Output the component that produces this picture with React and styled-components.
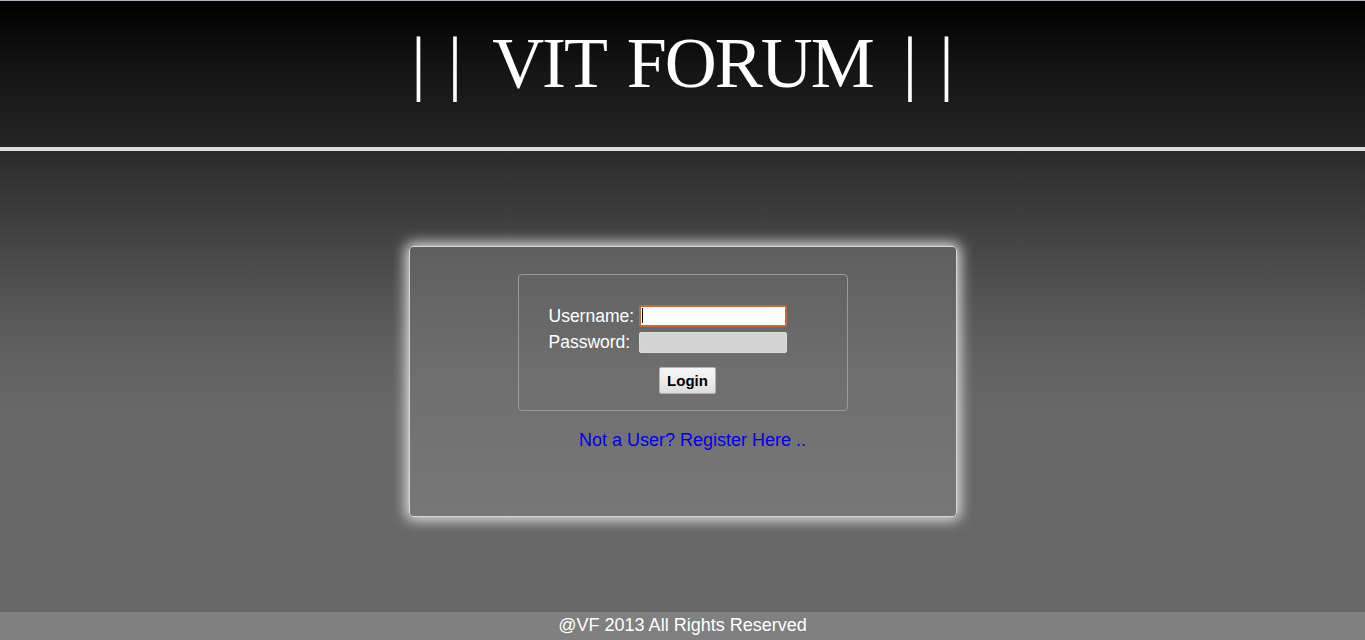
import React from "react";
import styled, { createGlobalStyle } from "styled-components";

const Global = createGlobalStyle`
  html, body { margin: 0; padding: 0; }
  body {
    font-family: "Liberation Sans", Arial, sans-serif;
    background: #676767;
    min-height: 640px;
  }
`;

const Page = styled.div`
  display: flex;
  flex-direction: column;
  height: 640px;
  overflow: hidden;
`;

const Header = styled.header`
  height: 147px;
  box-sizing: border-box;
  border-top: 1px solid #a7b0b9;
  padding-top: 26px;
  background: linear-gradient(to bottom, #000000 0%, #141414 45%, #252525 100%);
  display: flex;
  justify-content: center;
`;

const Title = styled.h1`
  margin: 0;
  display: flex;
  gap: 30px;
  font-family: "Liberation Serif", "Times New Roman", serif;
  font-weight: normal;
  font-size: 72px;
  line-height: 72px;
  color: #ffffff;
  white-space: pre;
`;

const Bars = styled.span`
  word-spacing: 4px;
`;

const Name = styled.span`
  letter-spacing: -2px;
  word-spacing: 6px;
`;

const Divider = styled.div`
  height: 4px;
  background: #dcdcdc;
`;

const Main = styled.main`
  flex: 1;
  background: linear-gradient(to bottom, #2b2b2b 0px, #4a4a4a 110px, #606060 200px, #676767 260px, #676767 100%);
  display: flex;
  flex-direction: column;
  align-items: center;
  padding-top: 95px;
`;

const Card = styled.section`
  width: 548px;
  height: 271px;
  box-sizing: border-box;
  border: 1px solid #d8d8d8;
  border-radius: 4px;
  background: linear-gradient(to bottom, #5f5f5f 0%, #6f6f6f 50%, #777777 100%);
  box-shadow: 0 0 14px 3px rgba(255, 255, 255, 0.85);
  display: flex;
  flex-direction: column;
  align-items: center;
  padding-top: 27px;
`;

const FormBox = styled.form`
  width: 330px;
  height: 137px;
  box-sizing: border-box;
  border: 1px solid #9a9a9a;
  border-radius: 4px;
  display: flex;
  flex-direction: column;
  align-items: center;
  padding-top: 30px;
`;

const Fields = styled.div`
  align-self: flex-start;
  margin-left: 30px;
  display: grid;
  grid-template-columns: 86px 148px;
  column-gap: 4px;
  row-gap: 5px;
  align-items: center;
`;

const Label = styled.label`
  color: #ffffff;
  font-size: 17.5px;
  line-height: 21px;
  white-space: nowrap;
`;

const Input = styled.input`
  box-sizing: border-box;
  width: 148px;
  height: ${(p) => (p.$focused ? "22px" : "21px")};
  margin: 0;
  padding: 0 2px;
  font-family: "Liberation Sans", Arial, sans-serif;
  font-size: 15px;
  outline: none;
  border-radius: 2px;
  border: ${(p) => (p.$focused ? "2px solid #c46a3a" : "1px solid #dcdcdc")};
  background: ${(p) => (p.$focused ? "#ffffff" : "#d3d3d3")};
  caret-color: #000;
`;

const Caret = styled.span`
  position: absolute;
  left: 3px;
  top: 3px;
  width: 1px;
  height: 15px;
  background: #000;
`;

const InputWrap = styled.div`
  position: relative;
  width: 148px;
  height: ${(p) => p.$h || 22}px;
`;

const Button = styled.button`
  margin-top: 14px;
  margin-left: 10px;
  width: 57px;
  height: 27px;
  box-sizing: border-box;
  font-family: "Liberation Sans", Arial, sans-serif;
  font-weight: bold;
  font-size: 15px;
  color: #000;
  border: 1px solid #b5b5b5;
  border-radius: 2px;
  background: linear-gradient(to bottom, #f6f6f6 0%, #ececec 50%, #dcdcdc 100%);
  padding: 0;
  cursor: pointer;
`;

const RegisterLink = styled.a`
  margin-top: 19px;
  margin-left: 20px;
  font-size: 18px;
  line-height: 21px;
  color: #0000ee;
  text-decoration: none;
`;

const Footer = styled.footer`
  height: 28px;
  background: #808080;
  color: #ffffff;
  font-size: 18px;
  line-height: 26px;
  text-align: center;
`;

export default function App() {
  return (
    <>
      <Global />
      <Page>
        <Header>
          <Title>
            <Bars>| |</Bars>
            <Name>VIT FORUM</Name>
            <Bars>| |</Bars>
          </Title>
        </Header>
        <Divider />
        <Main>
          <Card>
            <FormBox onSubmit={(e) => e.preventDefault()}>
              <Fields>
                <Label htmlFor="u">Username:</Label>
                <InputWrap $h={22}>
                  <Input id="u" type="text" $focused />
                  <Caret />
                </InputWrap>
                <Label htmlFor="p">Password:</Label>
                <InputWrap $h={21}>
                  <Input id="p" type="password" />
                </InputWrap>
              </Fields>
              <Button type="submit">Login</Button>
            </FormBox>
            <RegisterLink href="#">Not a User? Register Here ..</RegisterLink>
          </Card>
        </Main>
        <Footer>@VF 2013 All Rights Reserved</Footer>
      </Page>
    </>
  );
}
